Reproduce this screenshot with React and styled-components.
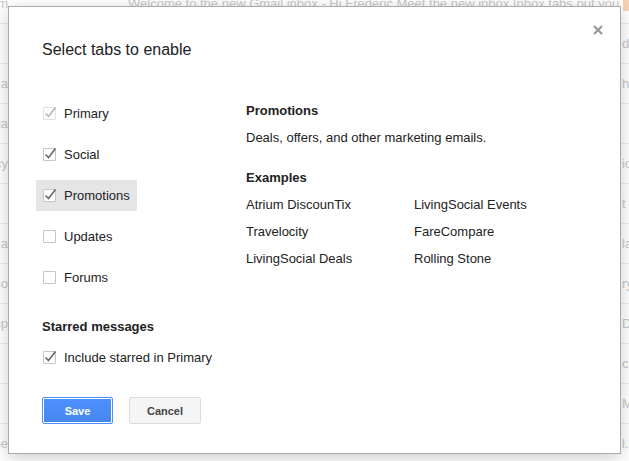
import React from "react";
import styled, { createGlobalStyle } from "styled-components";

const Global = createGlobalStyle`
  html, body { margin: 0; padding: 0; background: #fff; }
  body { font-family: "Liberation Sans", Arial, sans-serif; }
`;

const Page = styled.div`
  position: relative;
  width: 629px;
  height: 461px;
  overflow: hidden;
  background: #fff;
`;

const Inbox = styled.div`
  margin-top: -16px;
  display: flex;
  flex-direction: column;
`;

const InboxRow = styled.div`
  display: grid;
  grid-template-columns: 8px 614px 7px;
  height: 39px;
  border-bottom: 1px solid #ebebeb;
  align-items: center;
  font-size: 13px;
  color: #c8c8c8;
  white-space: nowrap;
`;

const EdgeLeft = styled.span`
  overflow: hidden;
  display: flex;
  justify-content: flex-end;
`;

const Middle = styled.span`
  overflow: hidden;
  padding-left: 120px;
`;

const EdgeRight = styled.span`
  overflow: hidden;
  display: flex;
`;

const Marker = styled.span`
  display: inline-block;
  width: 6px;
  height: 14px;
  margin-left: 1px;
  background: #f6d3b6;
`;

const Dialog = styled.div`
  position: absolute;
  left: 8px;
  top: 6px;
  width: 613px;
  height: 448px;
  box-sizing: border-box;
  background: #fff;
  border: 1px solid rgba(0, 0, 0, 0.333);
  box-shadow: 0 4px 16px rgba(0, 0, 0, 0.2);
  padding: 33px 33px 0 33px;
  color: #222;
  font-family: "Liberation Sans", Arial, sans-serif;
`;

const Close = styled.button`
  position: absolute;
  right: 17px;
  top: 18px;
  width: 10px;
  height: 10px;
  padding: 0;
  border: 0;
  background: none;
  display: flex;
`;

const Title = styled.h1`
  margin: 0;
  font-size: 16px;
  line-height: 20px;
  font-weight: normal;
  color: #222;
`;

const Body = styled.div`
  display: flex;
  margin-top: 38px;
`;

const LeftCol = styled.div`
  width: 204px;
  display: flex;
  flex-direction: column;
  align-items: flex-start;
  gap: 10px;
`;

const Option = styled.label`
  display: inline-flex;
  align-items: center;
  gap: 8px;
  height: 31px;
  padding: 0 7px;
  margin-left: -6px;
  font-size: 13px;
  color: #222;
  background: ${(p) => (p.$active ? "#e5e5e5" : "transparent")};
`;

const Box = styled.span`
  position: relative;
  width: 13px;
  height: 13px;
  box-sizing: border-box;
  border: 1px solid ${(p) => (p.$disabled ? "#e1e1e1" : "#c6c6c6")};
  border-radius: 1px;
  background: #fff;
  flex: none;
`;

const Tick = styled.svg`
  position: absolute;
  left: -1px;
  top: -3px;
`;

const RightCol = styled.div`
  flex: 1;
  padding-top: 5px;
  font-size: 13px;
  line-height: 16px;
`;

const Heading = styled.div`
  font-weight: bold;
  font-size: 13px;
  line-height: 16px;
  margin-top: ${(p) => p.$mt || 0}px;
`;

const Desc = styled.div`
  margin-top: 11px;
`;

const Examples = styled.div`
  display: grid;
  grid-template-columns: 168px 168px;
  row-gap: 11px;
  margin-top: 11px;
`;

const Starred = styled.div`
  margin-top: 26px;
  display: flex;
  flex-direction: column;
  align-items: flex-start;
  gap: 7px;
`;

const Buttons = styled.div`
  display: flex;
  gap: 16px;
  margin-top: 24px;
`;

const Button = styled.button`
  height: 27px;
  width: ${(p) => p.$w}px;
  box-sizing: border-box;
  border-radius: 2px;
  font-family: "Liberation Sans", Arial, sans-serif;
  font-weight: bold;
  font-size: 11px;
  padding: 0;
  ${(p) =>
    p.$primary
      ? `
    background: linear-gradient(#4d90fe, #4787ed);
    border: 1px solid #4d90fe;
    box-shadow: inset 0 0 0 1px #fff;
    color: #fff;
  `
      : `
    background: #f5f5f5;
    border: 1px solid #dcdcdc;
    color: #444;
  `}
`;

const Check = ({ checked, disabled }) => (
  <Box $disabled={disabled}>
    {checked && (
      <Tick width="15" height="15" viewBox="0 0 15 15">
        <path
          d="M2.5 8.5 L5.5 11.5 L12.5 2.5"
          fill="none"
          stroke={disabled ? "#b8b8b8" : "#6b6b6b"}
          strokeWidth="1.7"
        />
      </Tick>
    )}
  </Box>
);

const rows = [
  { l: "m", m: "Welcome to the new Gmail inbox - Hi Frederic Meet the new inbox Inbox tabs put you", r: "marker" },
  { l: "", r: "do" },
  { l: "a", r: "h" },
  { l: "la", r: "" },
  { l: "cy", r: "io" },
  { l: "", r: "t" },
  { l: "a", r: "la" },
  { l: "co", r: "ry" },
  { l: "mp", r: "D" },
  { l: "", r: "co" },
  { l: "", r: "M" },
  { l: "me", r: "l.c" },
];

const tabs = [
  { name: "Primary", checked: true, disabled: true },
  { name: "Social", checked: true },
  { name: "Promotions", checked: true, active: true },
  { name: "Updates" },
  { name: "Forums" },
];

const examples = [
  "Atrium DiscounTix",
  "LivingSocial Events",
  "Travelocity",
  "FareCompare",
  "LivingSocial Deals",
  "Rolling Stone",
];

export default function App() {
  return (
    <>
      <Global />
      <Page>
        <Inbox>
          {rows.map((r, i) => (
            <InboxRow key={i}>
              <EdgeLeft>{r.l}</EdgeLeft>
              <Middle>{r.m || ""}</Middle>
              <EdgeRight>{r.r === "marker" ? <Marker /> : r.r}</EdgeRight>
            </InboxRow>
          ))}
        </Inbox>
        <Dialog>
          <Close aria-label="Close">
            <svg width="10" height="10" viewBox="0 0 10 10">
              <path d="M1 1 L9 9 M9 1 L1 9" stroke="#999" strokeWidth="2.2" />
            </svg>
          </Close>
          <Title>Select tabs to enable</Title>
          <Body>
            <LeftCol>
              {tabs.map((t) => (
                <Option key={t.name} $active={t.active}>
                  <Check checked={t.checked} disabled={t.disabled} />
                  {t.name}
                </Option>
              ))}
            </LeftCol>
            <RightCol>
              <Heading>Promotions</Heading>
              <Desc>Deals, offers, and other marketing emails.</Desc>
              <Heading $mt={24}>Examples</Heading>
              <Examples>
                {examples.map((e) => (
                  <span key={e}>{e}</span>
                ))}
              </Examples>
            </RightCol>
          </Body>
          <Starred>
            <Heading>Starred messages</Heading>
            <Option>
              <Check checked />
              Include starred in Primary
            </Option>
          </Starred>
          <Buttons>
            <Button $primary $w={71}>Save</Button>
            <Button $w={72}>Cancel</Button>
          </Buttons>
        </Dialog>
      </Page>
    </>
  );
}
